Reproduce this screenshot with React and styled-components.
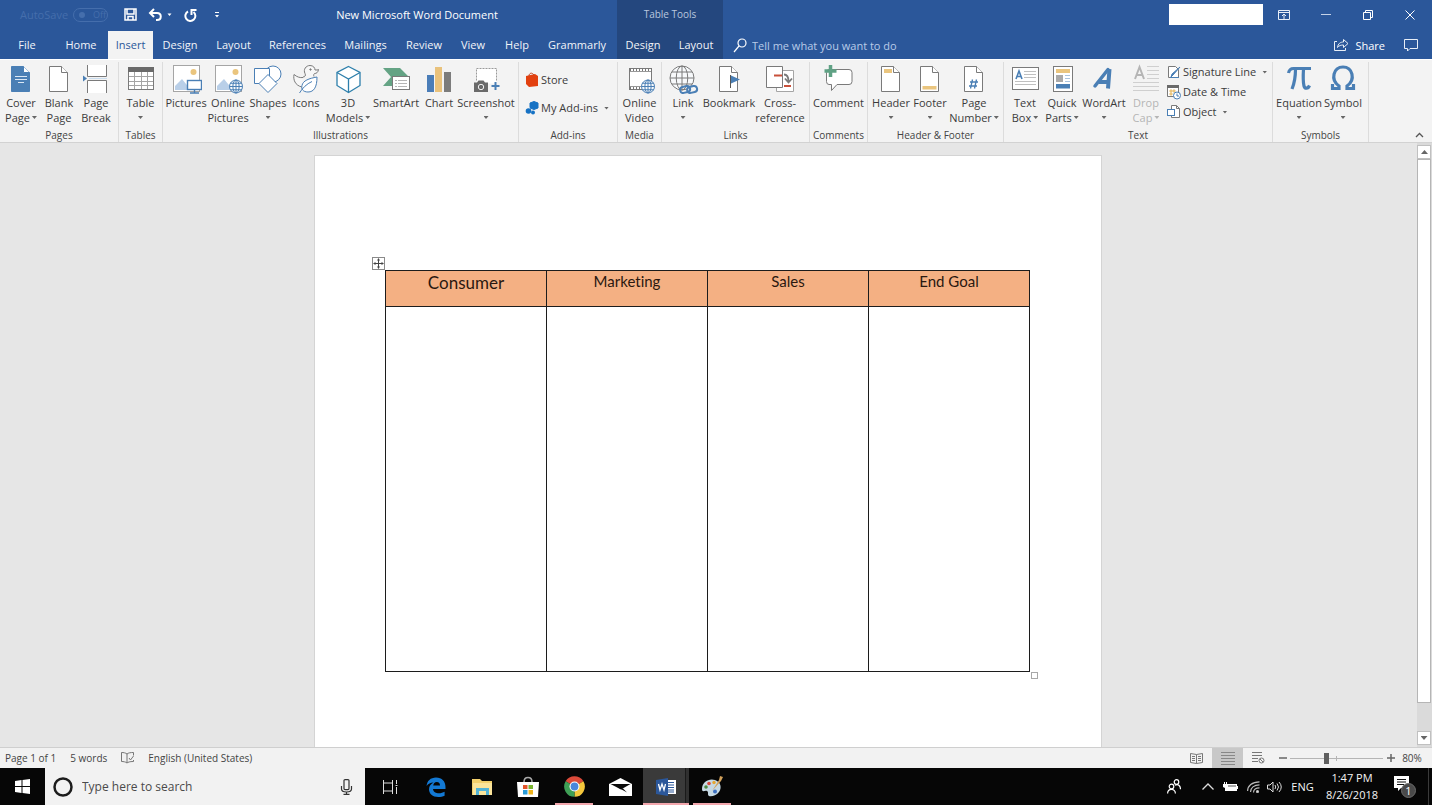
import React from 'react';
import styled, { createGlobalStyle, css } from 'styled-components';

const ui = '"Open Sans", "Noto Sans", sans-serif';
const BLUE = '#2b579a';
const ACCENT = '#4a7fb5';
const LINE = '#7a7a7a';
const GOLD = '#eac57e';

const Global = createGlobalStyle`
  *, *::before, *::after { box-sizing: border-box; }
  html, body, #root { height: 100%; }
  body { margin: 0; font-family: ${ui}; font-size: 11px; color: #3b3b3b; overflow: hidden; }
  button, input { font: inherit; color: inherit; }
  button { background: none; border: 0; padding: 0; margin: 0; white-space: nowrap; cursor: default; }
  svg { display: block; flex: none; }
`;

const Shell = styled.div`
  display: flex;
  flex-direction: column;
  height: 100vh;
  background: #e6e6e6;
`;

/* ---------- Title bar and tabs ---------- */

const Header = styled.header`
  display: grid;
  grid-template-columns: 617px 106px 1fr;
  grid-template-rows: 31px 28px;
  flex: none;
  background: ${BLUE};
  color: #fff;
`;

const TitleArea = styled.div`
  display: flex;
  align-items: center;
  padding-bottom: 2px;
`;

const QuickAccess = styled.div`
  display: flex;
  align-items: center;
  flex: none;
  width: 231px;
  padding-left: 20px;
`;

const AutoSave = styled.label`
  display: flex;
  align-items: center;
  gap: 5px;
  flex: none;
  width: 103px;
  color: #456eac;
`;

const SwitchBox = styled.span`
  display: flex;
  align-items: center;
  gap: 8px;
  width: 35px;
  height: 14px;
  padding: 0 5px;
  border: 1px solid #456eac;
  border-radius: 7px;
  font-size: 9px;
  &::before {
    content: '';
    width: 6px;
    height: 6px;
    border-radius: 50%;
    background: #456eac;
    flex: none;
  }
`;

const HiddenCheck = styled.input`
  position: absolute;
  opacity: 0;
  width: 1px;
  height: 1px;
  margin: 0;
`;

const QuickButton = styled.button`
  display: flex;
  align-items: center;
  justify-content: center;
  flex: none;
  width: ${(p) => p.$w}px;
  height: 24px;
`;

const DocTitle = styled.h1`
  flex: 1;
  margin: 0;
  padding-right: 14px;
  font-size: 11px;
  font-weight: 400;
  text-align: center;
`;

const ContextTitle = styled.div`
  display: flex;
  align-items: center;
  justify-content: center;
  padding-bottom: 3px;
  background: #24477e;
  color: #b9c8de;
  font-size: 10px;
`;

const WindowControls = styled.div`
  display: flex;
  align-items: center;
  justify-content: flex-end;
  padding: 0 1px 2px 0;
`;

const AccountBox = styled.div`
  width: 94px;
  height: 21px;
  background: #fff;
`;

const WindowButton = styled.button`
  display: flex;
  align-items: center;
  justify-content: center;
  width: 42px;
  height: 28px;
`;

const TabStrip = styled.nav`
  display: flex;
  background: ${(p) => (p.$context ? '#24477e' : 'transparent')};
`;

const Tab = styled.button`
  width: ${(p) => p.$w}px;
  height: 28px;
  line-height: 28px;
  color: #f1f4f9;
  ${(p) =>
    p.$active &&
    css`
      background: #f3f3f3;
      color: ${BLUE};
    `}
`;

const TabTools = styled.div`
  display: flex;
  align-items: center;
  padding: 0 14px 0 10px;
`;

const TellMe = styled.label`
  display: flex;
  align-items: center;
  gap: 5px;
  flex: 1;
`;

const TellMeInput = styled.input`
  flex: 1;
  min-width: 0;
  border: 0;
  padding: 0;
  background: transparent;
  outline: none;
  &::placeholder { color: #b9cbe8; opacity: 1; }
`;

const ShareButton = styled.button`
  display: flex;
  align-items: center;
  gap: 6px;
  margin-right: 19px;
`;

/* ---------- Ribbon ---------- */

const Ribbon = styled.section`
  display: flex;
  flex: none;
  height: 84px;
  padding-top: 2px;
  background: #f3f3f3;
  border-top: 1px solid #fff;
  border-bottom: 1px solid #d2d2d2;
`;

const Group = styled.div`
  display: flex;
  flex-direction: column;
  justify-content: space-between;
  flex: none;
  width: ${(p) => p.$w}px;
  border-right: 1px solid #dcdcdc;
`;

const GroupBody = styled.div`
  display: flex;
  align-items: flex-start;
  padding-left: ${(p) => p.$pad || 0}px;
`;

const GroupLabel = styled.div`
  height: 15px;
  line-height: 16px;
  font-size: 10px;
  text-align: center;
  color: #444;
`;

const Caret = styled.span`
  width: 5px;
  height: 3px;
  background: #666;
  clip-path: polygon(0 0, 100% 0, 50% 100%);
`;

const BigButton = styled.button`
  display: flex;
  flex-direction: column;
  align-items: center;
  flex: none;
  width: ${(p) => p.$w}px;
  padding-top: 2px;
  line-height: 15px;
  color: ${(p) => (p.disabled ? '#b5b5b5' : '#3b3b3b')};
  ${Caret} { background: ${(p) => (p.disabled ? '#b5b5b5' : '#666')}; }
`;

const LabelLine = styled.span`
  display: flex;
  align-items: center;
  justify-content: center;
  gap: 2px;
  height: 15px;
  &:first-of-type { margin-top: 1px; }
`;

const SmallStack = styled.div`
  display: flex;
  flex-direction: column;
  gap: ${(p) => p.$gap}px;
  padding: ${(p) => p.$pad};
`;

const SmallButton = styled.button`
  display: flex;
  align-items: center;
  gap: 2px;
  height: 16px;
  line-height: 16px;
  ${Caret} { margin-left: 4px; }
`;

const CollapseArea = styled.div`
  display: flex;
  flex: 1;
  align-items: flex-end;
  justify-content: flex-end;
  padding: 0 8px 4px;
`;

/* ---------- Document ---------- */

const Workspace = styled.main`
  display: flex;
  flex: 1;
  min-height: 0;
`;

const Canvas = styled.div`
  display: flex;
  flex: 1;
  justify-content: center;
  padding: 12px 1px 0 0;
  overflow: hidden;
`;

const Sheet = styled.article`
  width: 788px;
  padding: 114px 71px 0 70px;
  background: #fff;
  border: 1px solid #d4d4d4;
  border-bottom: 0;
`;

const TableFrame = styled.div`
  position: relative;
`;

const MoveHandle = styled.span`
  position: absolute;
  left: -13px;
  top: -13px;
  width: 13px;
  height: 13px;
  border: 1px solid #8a8a8a;
  background: #fff;
`;

const SizeHandle = styled.span`
  position: absolute;
  right: -8px;
  bottom: -7px;
  width: 7px;
  height: 7px;
  border: 1px solid #a8a8a8;
  background: #fff;
`;

const DocTable = styled.table`
  width: 100%;
  border-collapse: collapse;
  table-layout: fixed;
  font-family: Lato, sans-serif;
  font-variant-ligatures: none;
  color: #2a1810;
  th, td { border: 1px solid #1c1c1c; padding: 0; }
  td { height: 365px; }
`;

const HeadCell = styled.th`
  height: 36px;
  background: #f4b083;
  vertical-align: top;
  font-size: ${(p) => (p.$large ? 17 : 15)}px;
  line-height: ${(p) => (p.$large ? 23 : 20)}px;
  font-weight: 400;
`;

const ScrollTrack = styled.div`
  display: flex;
  flex-direction: column;
  width: 15px;
  padding: 2px 1px 2px 0;
  background: #dadada;
`;

const ScrollButton = styled.button`
  display: flex;
  align-items: center;
  justify-content: center;
  flex: none;
  height: 14px;
  background: #fff;
  border: 1px solid #c0c0c0;
  ${Caret} { width: 7px; height: 4px; transform: ${(p) => (p.$up ? 'rotate(180deg)' : 'none')}; }
`;

const ScrollThumb = styled.div`
  flex: 1;
  margin-bottom: 28px;
  background: #fff;
  border: 1px solid #b5b5b5;
`;

/* ---------- Status bar ---------- */

const StatusBar = styled.footer`
  display: flex;
  align-items: center;
  flex: none;
  height: 21px;
  padding: 0 9px 0 5px;
  background: #f2f2f2;
  border-top: 1px solid #cfcfcf;
  font-size: 10px;
  color: #444;
`;

const StatusInfo = styled.div`
  display: flex;
  align-items: center;
  gap: 14px;
  flex: 1;
`;

const ViewButton = styled.button`
  display: flex;
  align-items: center;
  justify-content: center;
  width: 31px;
  height: 20px;
  background: ${(p) => (p.$active ? '#c8c8c8' : 'transparent')};
`;

const Zoom = styled.div`
  display: flex;
  align-items: center;
  gap: 3px;
  padding-left: 4px;
`;

const ZoomButton = styled.button`
  display: flex;
  align-items: center;
  justify-content: center;
  width: 9px;
  height: 20px;
`;

const ZoomRange = styled.input`
  appearance: none;
  width: 93px;
  height: 12px;
  margin: 0;
  background: linear-gradient(#b5b5b5, #b5b5b5) center / 100% 1px no-repeat,
    linear-gradient(#b5b5b5, #b5b5b5) center / 1px 5px no-repeat;
  &::-webkit-slider-thumb {
    appearance: none;
    width: 5px;
    height: 11px;
    background: #5f5f5f;
  }
`;

const ZoomValue = styled.span`
  width: 22px;
  margin-left: 3px;
  text-align: center;
`;

/* ---------- Taskbar ---------- */

const Taskbar = styled.div`
  display: flex;
  flex: none;
  height: 37px;
  background: #060606;
  color: #f4f4f4;
`;

const StartButton = styled.button`
  display: flex;
  align-items: center;
  justify-content: center;
  width: 45px;
`;

const SearchBox = styled.label`
  display: flex;
  align-items: center;
  gap: 9px;
  width: 320px;
  padding: 0 12px 0 8px;
  background: #f2f2f2;
  color: #333;
`;

const SearchInput = styled.input`
  flex: 1;
  min-width: 0;
  border: 0;
  padding: 0;
  background: transparent;
  outline: none;
  font-size: 12px;
  &::placeholder { color: #4a4a4a; opacity: 1; }
`;

const Apps = styled.div`
  display: flex;
  flex: 1;
  padding-left: 2px;
`;

const AppButton = styled.button`
  display: flex;
  align-items: center;
  justify-content: center;
  width: 46px;
  background: ${(p) =>
    p.$active
      ? 'linear-gradient(90deg, #3a3a3a 42px, #1a1a1a 42px, #1a1a1a 43px, #303030 43px)'
      : 'transparent'};
  ${(p) =>
    p.$line &&
    css`
      box-shadow: inset 0 -2px 0 #f3a7ad;
    `}
  ${(p) =>
    p.$line &&
    !p.$active &&
    css`
      width: 38px;
      margin: 0 4px;
    `}
`;

const Tray = styled.div`
  display: flex;
  align-items: center;
  padding-right: 3px;
`;

const TrayButton = styled.button`
  display: flex;
  align-items: center;
  justify-content: center;
  width: ${(p) => p.$w}px;
  height: 37px;
`;

const Clock = styled.div`
  display: flex;
  flex-direction: column;
  width: 62px;
  height: 37px;
  padding-top: 1px;
  line-height: 17px;
  text-align: center;
`;

const ShowDesktop = styled.div`
  width: 1px;
  height: 37px;
  background: #3a3a3a;
`;

/* ---------- Icons ---------- */

const Art = ({ children, w = 32, h = 30 }) => (
  <svg width={w} height={h} viewBox={`0 0 ${w} ${h}`} fill="none" stroke={LINE} aria-hidden="true">
    {children}
  </svg>
);

const PageShape = ({ fill = '#fff', stroke = LINE }) => (
  <>
    <path d="M6.500 2.500h12l6 6v19h-18z" fill={fill} stroke={stroke} />
    <path d="M18.500 2.500v6h6" fill="#fff" stroke={stroke} />
  </>
);

const Globe = ({ x, y, r, color = LINE }) => (
  <g stroke={color}>
    <circle cx={x} cy={y} r={r} fill="#f7f9fb" />
    <ellipse cx={x} cy={y} rx={r * 0.48} ry={r} />
    <path
      d={`M${x} ${y - r}v${2 * r}M${x - r} ${y}h${2 * r}M${x - r * 0.85} ${y - r * 0.5}h${r * 1.7}M${x - r * 0.85} ${y + r * 0.5}h${r * 1.7}`}
    />
  </g>
);

const Scene = () => (
  <>
    <rect x="3.500" y="1.500" width="26" height="26" fill="#fff" stroke="#a5a5a5" />
    <path d="M5 26v-4l7-7 9 11z" fill="#b9cfe8" stroke="none" />
    <circle cx="23.500" cy="8" r="3" fill={GOLD} stroke="none" />
  </>
);

const icons = {
  cover: (
    <Art>
      <PageShape fill={ACCENT} stroke={ACCENT} />
      <path d="M10 12.500h12M10 15.500h12M13 18.500h6" stroke="#dbe8f5" />
    </Art>
  ),
  blank: <Art><PageShape /></Art>,
  break: (
    <Art>
      <path d="M7.500 1v11.500h19V1M7.500 29V16.500h19V29" fill="#fff" />
      <path d="M3 11.500l4 3-4 3z" fill={ACCENT} stroke="none" />
      <path d="M9 14.500h18" stroke="#c9dcee" />
    </Art>
  ),
  table: (
    <Art>
      <rect x="3.500" y="3.500" width="25" height="22" fill="#fff" />
      <path d="M3 3h26v5H3z" fill="#6a6a6a" stroke="none" />
      <path d="M9.500 8v17M16.500 8v17M22.500 8v17M4 12.500h24M4 17.500h24M4 21.500h24" stroke="#a5a5a5" />
    </Art>
  ),
  pictures: (
    <Art>
      <Scene />
      <rect x="17.500" y="16.500" width="14" height="9" fill="#fff" stroke={ACCENT} strokeWidth="1.400" />
      <path d="M24.500 26v2.500M20 29h9" stroke={ACCENT} strokeWidth="1.400" />
    </Art>
  ),
  onlinePictures: <Art><Scene /><Globe x={24} y={22.5} r={6.5} color={ACCENT} /></Art>,
  shapes: (
    <Art>
      <circle cx="21" cy="10" r="8" fill="#fff" stroke={ACCENT} />
      <path d="M2.500 4.500h15v15h-15z" fill="#fff" stroke={ACCENT} />
      <path d="M16 10.500l9 9-9 9-9-9z" fill="#fff" stroke={ACCENT} />
    </Art>
  ),
  icons: (
    <Art>
      <path d="M13 13.500c-3 .500-6-.500-9-3-1 5 1 11 8 12.500" fill="#f7f7f7" />
      <path d="M13 13c2 0 3-1.500 2-3.500-2-4 1-8 5-8 3.500 0 5 2.500 5 4.500 1.500 0 3 0 3.500-.500-.500 3-2 4-4 4-1 1-1 2-.500 3" fill="#f7f7f7" />
      <circle cx="20.500" cy="5.500" r=".7" fill={LINE} />
      <path d="M27 13c0 10-3 15-9 15-5 0-7-3-6-6.500 1-5 7-7 15-8.500zM9.500 29c3-5 7-9 12.500-11.500" fill="#fff" stroke={ACCENT} />
    </Art>
  ),
  cube: (
    <Art>
      <path d="M16.500 2.500l11.500 6v13l-11.500 7-11.500-7v-13z" fill="#fff" stroke="#2d7fab" strokeWidth="1.300" />
      <path d="M5 8.500l11.500 6.500L28 8.500M16.500 15v13" stroke="#2d7fab" strokeWidth="1.300" />
    </Art>
  ),
  smartart: (
    <Art>
      <path d="M3 4h17l9 9-5 9H3l8-9z" fill="#64a384" stroke="none" />
      <rect x="12.500" y="12.500" width="17" height="13" fill="#fff" />
      <path d="M15 16.500h2M18 16.500h9M15 19.500h2M18 19.500h9M15 22.500h2M18 22.500h9" stroke="#b5b5b5" />
    </Art>
  ),
  chart: (
    <Art>
      <g stroke="none">
        <path d="M4 11h7v17H4z" fill="#4a7db8" />
        <path d="M12 3h7v25h-7z" fill="#e9c27c" />
        <path d="M21 8h7v20h-7z" fill="#7c7c7c" />
      </g>
    </Art>
  ),
  screenshot: (
    <Art>
      <path d="M6.500 4.500h20v15h-20z" fill="#fff" stroke="none" />
      <path d="M6.500 16.500v-12h20v12" stroke="#999" strokeDasharray="2 1" />
      <path d="M4 18.500h3l1.500-2h5l1.500 2h3V28H4z" fill="#6a6a6a" stroke="none" />
      <circle cx="11" cy="23" r="2.700" stroke="#f3f3f3" />
      <path d="M25.500 18v8M21.500 22h8" stroke={ACCENT} strokeWidth="2" />
    </Art>
  ),
  video: (
    <Art>
      <rect x="5.500" y="4.500" width="22" height="21" fill="#fff" />
      <path d="M6 6h22M6 24h12" strokeWidth="3" stroke="#777" strokeDasharray="1 2" />
      <path d="M6 7.500h21M6 22.500h12" stroke="#999" />
      <Globe x={24} y={22.5} r={6.5} color={ACCENT} />
    </Art>
  ),
  link: (
    <Art>
      <Globe x={15} y={14} r={12} />
      <g stroke={ACCENT} strokeWidth="2">
        <rect x="13" y="22.500" width="10" height="6" rx="3" transform="rotate(-14 18 25)" />
        <rect x="20" y="22.500" width="10" height="6" rx="3" transform="rotate(-14 25 25)" />
      </g>
    </Art>
  ),
  bookmark: (
    <Art>
      <PageShape />
      <path d="M17.500 11v13" stroke="#555" />
      <path d="M18 11.500l9 4-9 4z" fill={ACCENT} stroke="none" />
    </Art>
  ),
  crossref: (
    <Art>
      <path d="M12.500 6.500h17v21h-17z" fill="#fff" stroke="#a5a5a5" />
      <path d="M2.500 2.500h16v21h-16z" fill="#fff" />
      <path d="M10 11.500h8M20 22h7" stroke="#c8503a" strokeWidth="2" />
      <path d="M20 10.500c3 0 4.500 2 4.500 7M21 14.500l3.500 4 3.500-4" strokeWidth="1.800" />
    </Art>
  ),
  comment: (
    <Art>
      <path d="M6 5.500h20q3 0 3 3v9q0 3-3 3H14l-5.500 6v-6H6q-2.500 0-2.500-3v-9q0-3 2.500-3z" fill="#fff" />
      <path d="M7.500 1v12M1.500 7h12" stroke="#5fa184" strokeWidth="3.500" />
    </Art>
  ),
  header: <Art><PageShape /><path d="M9 5h8v4H9z" fill={GOLD} stroke="none" /></Art>,
  footer: <Art><PageShape /><path d="M8.500 22h14v3.500h-14z" fill={GOLD} stroke="none" /></Art>,
  pageNumber: (
    <Art>
      <PageShape />
      <path d="M14.500 15.500l-2 9M18.500 15.500l-2 9M12 18h8M11 22h8" stroke={ACCENT} strokeWidth="1.300" />
    </Art>
  ),
  textBox: (
    <Art>
      <rect x="3.500" y="3.500" width="26" height="22" fill="#fff" />
      <path d="M7 15l3-8 3 8M8 12.500h4" stroke={ACCENT} strokeWidth="1.600" />
      <path d="M15 7.500h12M15 10.500h12M15 13.500h12M6 17.500h21M6 20.500h21" stroke="#c0c0c0" />
    </Art>
  ),
  quickParts: (
    <Art>
      <rect x="7.500" y="2.500" width="19" height="25" fill="#fff" />
      <path d="M10 5h14v4H10z" fill={GOLD} stroke="none" />
      <path d="M10 11h7v7h-7z" fill="#a9a9a9" stroke="none" />
      <path d="M19 11.500h5M19 14.500h5M19 17.500h5" stroke="#a9c3de" />
      <path d="M10 20h14v4.500H10z" fill={ACCENT} stroke="none" />
    </Art>
  ),
  wordArt: (
    <Art>
      <path d="M7 22L20 5.500" stroke={ACCENT} strokeWidth="3.500" strokeLinecap="round" />
      <path d="M21.500 5L20 24.500M11 18h9" stroke={ACCENT} strokeWidth="4" />
    </Art>
  ),
  dropCap: (
    <Art>
      <path d="M5 15l4.500-12L14 15M6.500 11h6" stroke="#b5b5b5" strokeWidth="2" />
      <path d="M17 2.500h12M17 6.500h12M17 10.500h12M17 14.500h12M3 18.500h26M3 22.500h26M3 26.500h26" stroke="#cfcfcf" />
    </Art>
  ),
  equation: (
    <Art>
      <path d="M5.500 9q1-4.500 5-4.500H28M12.500 5c0 8-1 14-3.500 20M20.500 5c-.500 8-.500 13 .500 17 .800 3 4 3 5.500-.500" stroke={ACCENT} strokeWidth="3.200" />
    </Art>
  ),
  symbol: (
    <Art>
      <path d="M5.500 20v4.500h6.500v-2.500c-9-6.500-5.500-19 4-19s13 12.500 4 19v2.500h6.500V20" stroke={ACCENT} strokeWidth="3.200" />
    </Art>
  ),
  store: (
    <Art w={14} h={16}>
      <path d="M1 4l9-2 3 2v10l-9 1-3-3z" fill="#e2400f" stroke="none" />
      <path d="M4 4c0-3 3-4 5-1" stroke="#c4441f" />
    </Art>
  ),
  addins: (
    <Art w={14} h={16}>
      <path d="M9 1.500l4 1.500v5L9 9.500 5 8V3z" fill="#1672c4" stroke="#1672c4" strokeLinejoin="round" />
      <path d="M4 7.500v2l4 2" stroke="#f3f3f3" strokeWidth="1.500" />
      <circle cx="3.500" cy="11" r="2.800" fill="#1672c4" stroke="none" />
      <circle cx="8" cy="12.500" r="2" fill="#1672c4" stroke="none" />
    </Art>
  ),
  signature: (
    <Art w={14} h={16}>
      <path d="M1.500 2.500h7l3 3v8h-10z" fill="#fff" />
      <path d="M13 3L6 11l-2 2 1-3z" fill={ACCENT} stroke={ACCENT} />
      <path d="M3 13.500h9" stroke={ACCENT} />
    </Art>
  ),
  date: (
    <Art w={14} h={16}>
      <path d="M.500 2.500h11v10H.500z" fill="#fff" />
      <path d="M0 1h12v3H0z" fill="#6a6a6a" stroke="none" />
      <path d="M3 6h2v2H3zM6 6h2v2H6zM3 9h2v2H3z" fill={GOLD} stroke={GOLD} />
      <circle cx="10" cy="11.500" r="3.500" fill="#fff" stroke={ACCENT} />
      <path d="M10 9.500v2.500h2" stroke={ACCENT} />
    </Art>
  ),
  object: (
    <Art w={14} h={16}>
      <path d="M4.500 1.500h5l3 3v9h-8z" fill="#fff" />
      <path d="M9.500 1.500v3h3" />
      <rect x=".500" y="5.500" width="7" height="6" fill="#fff" stroke={ACCENT} />
    </Art>
  ),
};

/* ---------- Data ---------- */

const tabs = [
  ['File', 54], ['Home', 54], ['Insert', 45], ['Design', 54], ['Layout', 53], ['References', 75],
  ['Mailings', 61], ['Review', 56], ['View', 42], ['Help', 46], ['Grammarly', 74],
];

const B = (icon, w, lines, drop = false, disabled = false) => ({ icon, w, lines, drop, disabled });

const groups = {
  pages: [B('cover', 40, ['Cover', 'Page'], true), B('blank', 36, ['Blank', 'Page']), B('break', 38, ['Page', 'Break'])],
  tables: [B('table', 43, ['Table'], true)],
  illustrations: [
    B('pictures', 46, ['Pictures']), B('onlinePictures', 38, ['Online', 'Pictures']),
    B('shapes', 42, ['Shapes'], true), B('icons', 34, ['Icons']), B('cube', 50, ['3D', 'Models'], true),
    B('smartart', 46, ['SmartArt']), B('chart', 40, ['Chart']), B('screenshot', 54, ['Screenshot'], true),
  ],
  media: [B('video', 43, ['Online', 'Video'])],
  links: [B('link', 42, ['Link'], true), B('bookmark', 50, ['Bookmark']), B('crossref', 52, ['Cross-', 'reference'])],
  comments: [B('comment', 57, ['Comment'])],
  headerFooter: [B('header', 46, ['Header'], true), B('footer', 32, ['Footer'], true), B('pageNumber', 56, ['Page', 'Number'], true)],
  text: [
    B('textBox', 42, ['Text', 'Box'], true), B('quickParts', 32, ['Quick', 'Parts'], true),
    B('wordArt', 52, ['WordArt'], true), B('dropCap', 32, ['Drop', 'Cap'], true, true),
  ],
  symbols: [B('equation', 48, ['Equation'], true), B('symbol', 40, ['Symbol'], true)],
};

const Buttons = ({ items }) =>
  items.map((b) => {
    const [first, second] = b.lines;
    return (
      <BigButton key={b.icon} $w={b.w} disabled={b.disabled}>
        {icons[b.icon]}
        <LabelLine>{first}</LabelLine>
        <LabelLine>
          {second}
          {b.drop && <Caret />}
        </LabelLine>
      </BigButton>
    );
  });

const RibbonGroup = ({ label, w, pad, items = [], children }) => (
  <Group $w={w} role="group" aria-label={label}>
    <GroupBody $pad={pad}>
      <Buttons items={items} />
      {children}
    </GroupBody>
    <GroupLabel>{label}</GroupLabel>
  </Group>
);

const Small = ({ icon, label, drop }) => (
  <SmallButton>
    {icons[icon]}
    {label}
    {drop && <Caret />}
  </SmallButton>
);

const AppHeader = () => (
  <Header>
    <TitleArea>
      <QuickAccess>
        <AutoSave>
          AutoSave
          <HiddenCheck type="checkbox" disabled />
          <SwitchBox>Off</SwitchBox>
        </AutoSave>
        <QuickButton $w={14} aria-label="Save">
          <svg width="13" height="13" viewBox="0 0 13 13" fill="none" stroke="#fff" strokeWidth="1.500">
            <path d="M1 1h11v11H1zM3 1v5h7V1M4 12V8.500h5V12" />
          </svg>
        </QuickButton>
        <QuickButton $w={46} aria-label="Undo">
          <svg width="24" height="14" viewBox="0 0 24 14" fill="none" stroke="#fff" strokeWidth="2">
            <path d="M6 1L2 5l4 4M2 5h7c5 0 5 7 0 7H8" />
            <path d="M19.500 5.500h4l-2 2.500z" fill="#fff" stroke="none" />
          </svg>
        </QuickButton>
        <QuickButton $w={14} aria-label="Repeat">
          <svg width="13" height="14" viewBox="0 0 13 14" fill="none" stroke="#fff" strokeWidth="2">
            <path d="M4 3.500A5 5 0 1 0 9.500 4M7.500 7V2h5" />
          </svg>
        </QuickButton>
        <QuickButton $w={40} aria-label="Customize Quick Access Toolbar">
          <svg width="4" height="6" viewBox="0 0 4 6" fill="#fff">
            <path d="M0 0h4v1H0zM0 3h4L2 5.500z" />
          </svg>
        </QuickButton>
      </QuickAccess>
      <DocTitle>New Microsoft Word Document</DocTitle>
    </TitleArea>
    <ContextTitle>Table Tools</ContextTitle>
    <WindowControls>
      <AccountBox />
      <WindowButton aria-label="Ribbon display options">
        <svg width="12" height="10" viewBox="0 0 12 10" fill="none" stroke="#e8eef7">
          <path d="M.500.500h11v9H.500zM.500 2.500h11M6 9V4M4 6l2-2 2 2" />
        </svg>
      </WindowButton>
      <WindowButton aria-label="Minimize">
        <svg width="10" height="10" viewBox="0 0 10 10" stroke="#c4d2e8"><path d="M0 4.500h10" /></svg>
      </WindowButton>
      <WindowButton aria-label="Restore">
        <svg width="10" height="10" viewBox="0 0 10 10" fill="none" stroke="#fff">
          <path d="M.500 2.500h7v7h-7zM2.500 2V.500h7v7H8" />
        </svg>
      </WindowButton>
      <WindowButton aria-label="Close">
        <svg width="10" height="10" viewBox="0 0 10 10" stroke="#fff"><path d="M.500.500l9 9M9.500.500l-9 9" /></svg>
      </WindowButton>
    </WindowControls>
    <TabStrip aria-label="Ribbon tabs">
      {tabs.map(([name, w]) => (
        <Tab key={name} $w={w} $active={name === 'Insert'}>{name}</Tab>
      ))}
    </TabStrip>
    <TabStrip $context aria-label="Table tools tabs">
      <Tab $w={52}>Design</Tab>
      <Tab $w={54}>Layout</Tab>
    </TabStrip>
    <TabTools>
      <TellMe>
        <svg width="14" height="15" viewBox="0 0 14 15" fill="none" stroke="#fff" strokeWidth="1.200">
          <circle cx="9" cy="5" r="4" />
          <path d="M6 8l-5 6" />
        </svg>
        <TellMeInput aria-label="Tell me" placeholder="Tell me what you want to do" />
      </TellMe>
      <ShareButton>
        <svg width="16" height="14" viewBox="0 0 16 14" fill="none" stroke="#e8eef7">
          <path d="M4 3.500H1.500v9h11V10" />
          <path d="M4.500 9.500c.500-4 3-5.500 6-5.500V1.500L15 5.500l-4.500 4V7c-2.500 0-4.500.500-6 2.500z" />
        </svg>
        Share
      </ShareButton>
      <button aria-label="Comments">
        <svg width="14" height="13" viewBox="0 0 14 13" fill="none" stroke="#e8eef7">
          <path d="M.500.500h13v9H6L3.500 12V9.500h-3z" />
        </svg>
      </button>
    </TabTools>
  </Header>
);

const AppRibbon = () => (
  <Ribbon>
    <RibbonGroup label="Pages" w={119} pad={1} items={groups.pages} />
    <RibbonGroup label="Tables" w={44} items={groups.tables} />
    <RibbonGroup label="Illustrations" w={356} items={groups.illustrations} />
    <RibbonGroup label="Add-ins" w={99}>
      <SmallStack $gap={12} $pad="10px 0 0 6px">
        <Small icon="store" label="Store" />
        <Small icon="addins" label="My Add-ins" drop />
      </SmallStack>
    </RibbonGroup>
    <RibbonGroup label="Media" w={44} items={groups.media} />
    <RibbonGroup label="Links" w={148} items={groups.links} />
    <RibbonGroup label="Comments" w={58} items={groups.comments} />
    <RibbonGroup label="Header & Footer" w={136} items={groups.headerFooter} />
    <RibbonGroup label="Text" w={269} items={groups.text}>
      <SmallStack $gap={4} $pad="2px 0 0 5px">
        <Small icon="signature" label="Signature Line" drop />
        <Small icon="date" label="Date & Time" />
        <Small icon="object" label="Object" drop />
      </SmallStack>
    </RibbonGroup>
    <RibbonGroup label="Symbols" w={96} pad={2} items={groups.symbols} />
    <CollapseArea>
      <button aria-label="Collapse the ribbon">
        <svg width="9" height="6" viewBox="0 0 9 6" fill="none" stroke="#555" strokeWidth="1.300">
          <path d="M1 5l3.500-3.500L8 5" />
        </svg>
      </button>
    </CollapseArea>
  </Ribbon>
);

const Document = () => (
  <Workspace>
    <Canvas>
      <Sheet>
        <TableFrame>
          <MoveHandle>
            <svg width="11" height="11" viewBox="0 0 11 11" stroke="#444" fill="#444">
              <path d="M5.500 2v7M2 5.500h7" />
              <path d="M5.500 0L7 2.500H4zM5.500 11L7 8.500H4zM0 5.500L2.500 4v3zM11 5.500L8.500 4v3z" stroke="none" />
            </svg>
          </MoveHandle>
          <DocTable>
            <thead>
              <tr>
                <HeadCell $large>Consumer</HeadCell>
                <HeadCell>Marketing</HeadCell>
                <HeadCell>Sales</HeadCell>
                <HeadCell>End Goal</HeadCell>
              </tr>
            </thead>
            <tbody>
              <tr><td /><td /><td /><td /></tr>
            </tbody>
          </DocTable>
          <SizeHandle />
        </TableFrame>
      </Sheet>
    </Canvas>
    <ScrollTrack>
      <ScrollButton $up aria-label="Scroll up"><Caret /></ScrollButton>
      <ScrollThumb />
      <ScrollButton aria-label="Scroll down"><Caret /></ScrollButton>
    </ScrollTrack>
  </Workspace>
);

const Status = () => (
  <StatusBar>
    <StatusInfo>
      <span>Page 1 of 1</span>
      <span>5 words</span>
      <svg width="13" height="12" viewBox="0 0 13 12" fill="none" stroke="#777">
        <path d="M6 2C4.500.800 2.500.500.500.500v9c2 0 4 .300 5.500 1.500zM6 2C7.500.800 9.500.500 12.500.500v3M6 11c1-.800 2.500-1.500 6.500-1.500V8M8 6l1.500 2 3-4" />
      </svg>
      <span>English (United States)</span>
    </StatusInfo>
    <ViewButton aria-label="Read mode">
      <svg width="13" height="11" viewBox="0 0 13 11" fill="none" stroke="#777">
        <path d="M6.500 1.500L.500.500v9l6 1 6-1v-9zM6.500 1.500v9M2 3.500h3M2 5.500h3M2 7.500h3M8 3.500h3M8 5.500h3M8 7.500h3" />
      </svg>
    </ViewButton>
    <ViewButton $active aria-label="Print layout">
      <svg width="14" height="13" viewBox="0 0 14 13" stroke="#888">
        <path d="M0 .500h14M0 3.500h14M0 6.500h14M0 9.500h14M0 12.500h14" />
      </svg>
    </ViewButton>
    <ViewButton aria-label="Web layout">
      <svg width="13" height="12" viewBox="0 0 13 12" fill="none" stroke="#777">
        <path d="M0 .500h10M0 3.500h10M0 6.500h6M0 9.500h6" />
        <circle cx="9.500" cy="8.500" r="2.500" />
        <path d="M8 7l3 3" />
      </svg>
    </ViewButton>
    <Zoom>
      <ZoomButton aria-label="Zoom out">
        <svg width="8" height="8" viewBox="0 0 8 8" stroke="#666" strokeWidth="1.500"><path d="M0 4h8" /></svg>
      </ZoomButton>
      <ZoomRange type="range" aria-label="Zoom" min="10" max="190" defaultValue="80" />
      <ZoomButton aria-label="Zoom in">
        <svg width="8" height="8" viewBox="0 0 8 8" stroke="#666" strokeWidth="1.500"><path d="M0 4h8M4 0v8" /></svg>
      </ZoomButton>
      <ZoomValue>80%</ZoomValue>
    </Zoom>
  </StatusBar>
);

const WindowsTaskbar = () => (
  <Taskbar>
    <StartButton aria-label="Start">
      <svg width="15" height="15" viewBox="0 0 15 15" fill="#fff">
        <path d="M0 2l6.500-1v6H0zM7.500.900L15 0v7H7.500zM0 8h6.500v6L0 13zM7.500 8H15v7l-7.500-1z" />
      </svg>
    </StartButton>
    <SearchBox>
      <svg width="20" height="20" viewBox="0 0 20 20" fill="none" stroke="#1c1c1c" strokeWidth="2.500">
        <circle cx="10" cy="10" r="8.500" />
      </svg>
      <SearchInput aria-label="Search" placeholder="Type here to search" />
      <svg width="13" height="16" viewBox="0 0 13 16" fill="none" stroke="#333" strokeWidth="1.200">
        <rect x="4" y=".600" width="5" height="10" rx="1" />
        <path d="M1.500 7v3c0 4 10 4 10 0V7M6.500 13v2.500M3.500 15.400h6" />
      </svg>
    </SearchBox>
    <Apps>
      <AppButton aria-label="Task view">
        <svg width="17" height="16" viewBox="0 0 17 16" fill="none" stroke="#ddd">
          <path d="M1.500 1v3h9V1M1.500 15v-3h9v3M1.500 4v8M10.500 4v8M14.500 1v4M14.500 8v7M13.500 6.500h2" />
        </svg>
      </AppButton>
      <AppButton aria-label="Edge">
        <svg width="20" height="20" viewBox="0 0 20 20" fill="#1379d4">
          <path d="M.600 9C1 4 4.500.500 10 .500c6 0 9.500 4 9.500 9.500v2H7c.300 3 3 4.300 6 4.300 2 0 4-.600 5.600-1.500v3.900c-1.700.900-4 1.300-6.300 1.300C6.500 20 3 16.800 3 12.300 3 9 4.900 6.800 7.500 5.500 4.500 5.500 2 7 .600 9zM7.200 8.500H14c0-2-1-3.500-3.200-3.500S7.500 6.700 7.200 8.500z" />
        </svg>
      </AppButton>
      <AppButton aria-label="File Explorer">
        <svg width="21" height="18" viewBox="0 0 21 18">
          <path d="M0 1h8l2 2h10v14H0z" fill="#f3d06c" />
          <path d="M1 5h19v12H1z" fill="#fbe49a" />
          <path d="M4 17v-7h13v7h-3v-4H7v4z" fill="#52b3d6" />
        </svg>
      </AppButton>
      <AppButton aria-label="Store">
        <svg width="22" height="22" viewBox="0 0 22 22">
          <path d="M7 6c0-6 8-6 8 0" fill="none" stroke="#aaa" strokeWidth="1.500" />
          <path d="M0 6h22l-1 15H1z" fill="#fff" />
          <path d="M6 9h4.500v4H6z" fill="#e3552b" />
          <path d="M11.500 9H16v4h-4.500z" fill="#7ab530" />
          <path d="M6 14h4.500v4.500H6z" fill="#2a9bd8" />
          <path d="M11.500 14H16v4.500h-4.500z" fill="#f0b41c" />
        </svg>
      </AppButton>
      <AppButton $line aria-label="Chrome">
        <svg width="21" height="21" viewBox="0 0 21 21">
          <path d="M10.500 10.500L1.600 5.300a10.300 10.300 0 0 1 17.800 0z" fill="#dc4a3a" />
          <path d="M10.500 10.500l8.900-5.200a10.300 10.300 0 0 1-8.900 15.500z" fill="#f5c73c" />
          <path d="M10.500 10.500v10.300A10.300 10.300 0 0 1 1.600 5.300z" fill="#3f9f56" />
          <circle cx="10.500" cy="10.500" r="5" fill="#fff" />
          <circle cx="10.500" cy="10.500" r="3.900" fill="#4a86dc" />
        </svg>
      </AppButton>
      <AppButton aria-label="Mail">
        <svg width="23" height="18" viewBox="0 0 23 18">
          <path d="M0 6l11.500-6L23 6v12H0z" fill="#fff" />
          <path d="M1.500 6h20L12 11.500z" fill="#0a0a0a" />
          <path d="M9 9.500l9 5-4-4z" fill="#0a0a0a" />
        </svg>
      </AppButton>
      <AppButton $active $line aria-label="Word">
        <svg width="20" height="18" viewBox="0 0 20 18">
          <path d="M10 2h10v14H10z" fill="#fff" />
          <path d="M12 4.500h6M12 7h6M12 9.500h6M12 12h6M12 14h6" stroke="#2b579a" />
          <path d="M0 2l12-2v18L0 16z" fill="#2b579a" />
          <path d="M2.500 6l1.500 6 2-6 2 6 1.500-6" fill="none" stroke="#fff" strokeWidth="1.300" />
        </svg>
      </AppButton>
      <AppButton $line aria-label="Paint">
        <svg width="22" height="21" viewBox="0 0 22 21">
          <path d="M1 13C1 6 8 2 14 4c6 2 7 8 4 12-3 4-8 5-10 4s0-4-2-5-5 2-5-2z" fill="#c6d9e4" />
          <circle cx="5" cy="11" r="1.800" fill="#4c8a3f" />
          <circle cx="8" cy="7.500" r="1.800" fill="#d9483b" />
          <circle cx="13" cy="6.500" r="1.700" fill="#e5a630" />
          <circle cx="14" cy="15.500" r="2" fill="#3b6fc0" />
          <path d="M11 15l7-11 1-4 3 1-2 4z" fill="#d3a25c" />
        </svg>
      </AppButton>
    </Apps>
    <Tray>
      <TrayButton $w={44} aria-label="People">
        <svg width="14" height="15" viewBox="0 0 14 15" fill="none" stroke="#fff" strokeWidth="1.200">
          <circle cx="4.500" cy="7.500" r="2.300" />
          <path d="M.600 14.500c0-5.500 7.800-5.500 7.800 0" />
          <circle cx="9.500" cy="3" r="2.300" />
          <path d="M8 6.300c3-1.800 5.500.500 5.500 4" />
        </svg>
      </TrayButton>
      <TrayButton $w={23} aria-label="Show hidden icons">
        <svg width="12" height="7" viewBox="0 0 12 7" fill="none" stroke="#ddd" strokeWidth="1.300"><path d="M.500 6.500L6 1l5.500 5.500" /></svg>
      </TrayButton>
      <TrayButton $w={23} aria-label="Battery">
        <svg width="15" height="10" viewBox="0 0 15 10" fill="#fff">
          <path d="M0 2h1V0h1v2h1V0h1v2h10v2h1v3h-1v2H2V6L0 5z" />
          <path d="M5 4h8" stroke="#555" />
        </svg>
      </TrayButton>
      <TrayButton $w={22} aria-label="Network">
        <svg width="13" height="12" viewBox="0 0 13 12" fill="none" stroke="#bbb" strokeWidth="1.200">
          <path d="M.600 10C.600 5 5 .800 12.500.800M3.500 11C3.500 7 7 3.800 12.500 3.800M6.500 11.500c0-3 2.500-4.700 6-4.700" />
          <circle cx="10.500" cy="10.500" r="1" fill="#fff" />
        </svg>
      </TrayButton>
      <TrayButton $w={20} aria-label="Volume">
        <svg width="15" height="12" viewBox="0 0 15 12" fill="none" stroke="#ddd">
          <path d="M.500 4h2.500L6 1v10L3 8H.500zM8 4q1.500 2 0 4M10 2.500q3 3.500 0 7M12 1q4.500 5 0 10" />
        </svg>
      </TrayButton>
      <TrayButton $w={37}>ENG</TrayButton>
      <Clock>
        <span>1:47 PM</span>
        <span>8/26/2018</span>
      </Clock>
      <TrayButton $w={45} aria-label="Notifications">
        <svg width="23" height="22" viewBox="0 0 23 22">
          <path d="M0 0h15v12H7l-3 3v-3H0z" fill="#fff" />
          <path d="M3 3.500h9M3 6h9M3 8.500h7" stroke="#111" />
          <circle cx="14.500" cy="14.500" r="7" fill="#4a4a4a" stroke="#6b6b6b" />
          <text x="14.500" y="18.500" textAnchor="middle" fontSize="11" fill="#fff" fontFamily="Open Sans">1</text>
        </svg>
      </TrayButton>
      <ShowDesktop />
    </Tray>
  </Taskbar>
);

export default function App() {
  return (
    <Shell>
      <Global />
      <AppHeader />
      <AppRibbon />
      <Document />
      <Status />
      <WindowsTaskbar />
    </Shell>
  );
}
